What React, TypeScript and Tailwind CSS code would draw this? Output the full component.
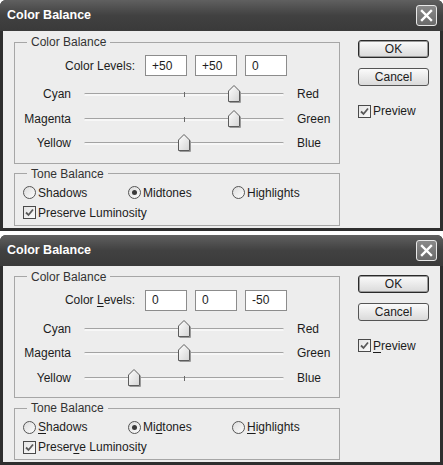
import React from "react";

const FONT = { fontFamily: '"Liberation Sans", Arial, sans-serif' };

function Acc({ text, idx, on }: { text: string; idx: number; on: boolean }) {
  if (!on || idx < 0) return <>{text}</>;
  return (
    <>
      {text.slice(0, idx)}
      <span className="underline underline-offset-[2px]">{text[idx]}</span>
      {text.slice(idx + 1)}
    </>
  );
}

function Check() {
  return (
    <span className="flex h-[13px] w-[13px] shrink-0 items-center justify-center border border-[#4a4a4a] bg-gradient-to-br from-[#e4e4e4] to-[#fbfbfb]">
      <svg width="9" height="9" viewBox="0 0 9 9">
        <path d="M1 4.5 L3.5 7 L8 1.5" fill="none" stroke="#5a5a5a" strokeWidth="1.8" />
      </svg>
    </span>
  );
}

function Radio({ checked }: { checked: boolean }) {
  return (
    <span className="flex h-[13px] w-[13px] shrink-0 items-center justify-center rounded-full border border-[#555] bg-gradient-to-br from-[#dcdcdc] to-[#fdfdfd]">
      {checked && <span className="h-[5px] w-[5px] rounded-full bg-[#3a3a3a]" />}
    </span>
  );
}

function Thumb({ value }: { value: number }) {
  const left = value + 100 - 6;
  return (
    <svg
      className="absolute top-[3px]"
      style={{ left }}
      width="13"
      height="18"
      viewBox="0 0 13 18"
    >
      <defs>
        <linearGradient id="tg" x1="0" y1="0" x2="1" y2="1">
          <stop offset="0" stopColor="#ffffff" />
          <stop offset="1" stopColor="#d4d4d4" />
        </linearGradient>
      </defs>
      <path d="M0.5 6 L6 0.5 L11.5 6 L11.5 16.5 L0.5 16.5 Z" fill="url(#tg)" stroke="#5c5c5c" strokeWidth="1" />
      <path d="M12.5 6.5 L12.5 17.5 L1.5 17.5" fill="none" stroke="#9a9a9a" strokeWidth="1" />
    </svg>
  );
}

function SliderRow({ left, right, value }: { left: string; right: string; value: number }) {
  return (
    <div className="flex h-[24.5px] items-center">
      <div className="w-[56px] text-right">{left}</div>
      <div className="relative ml-[13px] h-[24px] w-[200px]">
        <div className="absolute left-0 right-0 top-[11px] h-[3px] rounded-full border-t border-[#a3a3a3] bg-[#f7f7f7]" />
        <div className="absolute left-[100px] top-[10px] h-[5px] w-px bg-[#6a6a6a]" />
        <Thumb value={value} />
      </div>
      <div className="ml-[13px]">{right}</div>
    </div>
  );
}

function Input({ v }: { v: string }) {
  return (
    <div className="flex h-[21px] w-[42px] items-center border border-[#8c8c8c] bg-white pl-[6px]">
      {v}
    </div>
  );
}

function Dialog({
  levels,
  values,
  acc,
}: {
  levels: string[];
  values: number[];
  acc: boolean;
}) {
  return (
    <div className="flex h-[231px] w-[443px] flex-col overflow-hidden rounded-t-[6px] bg-[#2e2e2e] text-[12px] text-[#1c1c1c]">
      <div className="flex h-[31px] shrink-0 items-center justify-between bg-gradient-to-b from-[#606060] via-[#414141] to-[#3a3a3a] pl-[7px] pr-[6px]">
        <span className="text-[12.5px] font-bold text-white">Color Balance</span>
        <span className="flex h-[21px] w-[21px] items-center justify-center rounded-[3px] border border-[#e8e8e8] bg-gradient-to-b from-[#8a8a8a] to-[#6a6a6a]">
          <svg width="13" height="13" viewBox="0 0 13 13">
            <path d="M2 2 L11 11 M11 2 L2 11" stroke="#fff" strokeWidth="2.4" strokeLinecap="square" />
          </svg>
        </span>
      </div>
      <div className="mx-[3px] mb-[3px] flex flex-1 bg-[#ededed] pl-[11px] pt-[4px]">
        <div className="flex w-[326px] flex-col gap-[3px]">
          <fieldset className="border border-[#a6a6a6] px-0 pb-[7px] pt-[6px]">
            <legend className="ml-[12px] px-[4px] leading-[14px] text-[#333]">Color Balance</legend>
            <div className="flex h-[21px] items-center">
              <div className="w-[120px] text-right">
                <Acc text="Color Levels:" idx={6} on={acc} />
              </div>
              <div className="ml-[10px] flex gap-[8px]">
                {levels.map((l, i) => (
                  <Input key={i} v={l} />
                ))}
              </div>
            </div>
            <div className="mt-[6px] flex flex-col">
              <SliderRow left="Cyan" right="Red" value={values[0]} />
              <SliderRow left="Magenta" right="Green" value={values[1]} />
              <SliderRow left="Yellow" right="Blue" value={values[2]} />
            </div>
          </fieldset>
          <fieldset className="border border-[#a6a6a6] px-0 pb-[2px] pt-[2px]">
            <legend className="ml-[12px] px-[4px] leading-[14px] text-[#333]">Tone Balance</legend>
            <div className="flex h-[20px] items-center pl-[8px]">
              <div className="flex w-[105px] items-center gap-[2px]">
                <Radio checked={false} />
                <span>
                  <Acc text="Shadows" idx={0} on={acc} />
                </span>
              </div>
              <div className="flex w-[104px] items-center gap-[2px]">
                <Radio checked={true} />
                <span>
                  <Acc text="Midtones" idx={2} on={acc} />
                </span>
              </div>
              <div className="flex items-center gap-[2px]">
                <Radio checked={false} />
                <span>
                  <Acc text="Highlights" idx={0} on={acc} />
                </span>
              </div>
            </div>
            <div className="flex h-[20px] items-center gap-[2px] pl-[8px]">
              <Check />
              <span>
                <Acc text="Preserve Luminosity" idx={6} on={acc} />
              </span>
            </div>
          </fieldset>
        </div>
        <div className="ml-[18px] flex flex-col pt-[5px]">
          <div className="flex h-[18px] w-[71px] items-center justify-center rounded-[3px] border border-[#2a2a2a] bg-gradient-to-b from-[#fbfbfb] to-[#dadada] shadow-[inset_0_0_0_1px_#9a9a9a]">
            OK
          </div>
          <div className="mt-[10px] flex h-[18px] w-[71px] items-center justify-center rounded-[3px] border border-[#555] bg-gradient-to-b from-[#fbfbfb] to-[#dadada]">
            Cancel
          </div>
          <div className="mt-[16px] flex items-center gap-[2px]">
            <Check />
            <span>
              <Acc text="Preview" idx={0} on={acc} />
            </span>
          </div>
        </div>
      </div>
    </div>
  );
}

export default function App() {
  return (
    <div className="flex h-[465px] w-[443px] flex-col gap-[4px] overflow-hidden bg-white" style={FONT}>
      <Dialog levels={["+50", "+50", "0"]} values={[50, 50, 0]} acc={false} />
      <Dialog levels={["0", "0", "-50"]} values={[0, 0, -50]} acc={true} />
    </div>
  );
}
